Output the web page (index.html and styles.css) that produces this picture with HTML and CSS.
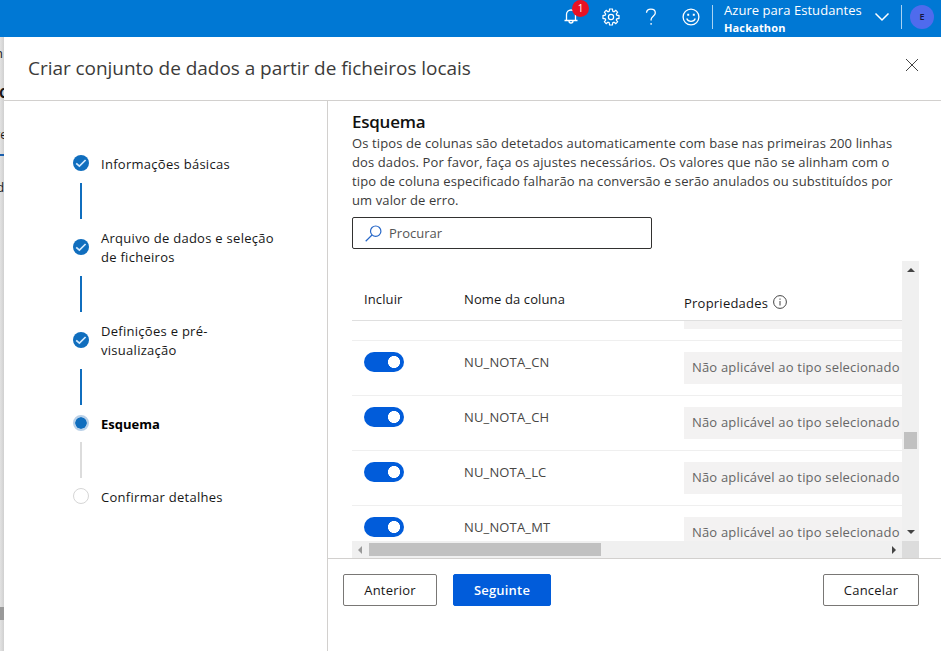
FILE: index.html
```html
<!DOCTYPE html>
<html lang="pt">
<head>
<meta charset="utf-8">
<title>Criar conjunto de dados</title>
<link rel="stylesheet" href="styles.css">
</head>
<body>
<header class="topbar">
  <div class="tool bell">
    <svg width="16" height="18" viewBox="0 0 16 18"><path d="M1.500 13.500H14.500M3.500 13V7.500a4.500 4.500 0 0 1 9 0V13M6 14a2 2 0 0 0 4 0" /></svg>
    <span class="badge">1</span>
  </div>
  <div class="tool gear">
    <svg width="18" height="18" viewBox="0 0 18 18"><path d="M7.600 1H10.400L10.800 3.200L12 3.700L13.800 2.400L15.600 4.200L14.300 6L14.800 7.200L17 7.600V10.400L14.800 10.800L14.300 12L15.600 13.800L13.800 15.600L12 14.300L10.800 14.800L10.400 17H7.600L7.200 14.800L6 14.300L4.200 15.600L2.400 13.800L3.700 12L3.200 10.800L1 10.400V7.600L3.200 7.200L3.700 6L2.400 4.200L4.200 2.400L6 3.700L7.200 3.200Z"/><circle cx="9" cy="9" r="2.600"/></svg>
  </div>
  <div class="tool help">
    <svg width="12" height="18" viewBox="0 0 12 18"><path d="M1.500 4.800C1.700 2.500 3.500 1.200 5.900 1.200C8.600 1.200 10.300 2.700 10.300 5C10.300 8 6.100 8.500 6.100 11.500V12.500M6.100 15V16.800"/></svg>
  </div>
  <div class="tool smile">
    <svg width="18" height="18" viewBox="0 0 18 18"><circle cx="9" cy="9" r="7.900"/><path d="M4.700 10.500C6.200 14.300 11.800 14.300 13.300 10.500"/><path class="solid" d="M5.200 5.700h2v2h-2zM10.800 5.700h2v2h-2z"/></svg>
  </div>
  <div class="account">
    <div class="names"><span class="subscription">Azure para Estudantes</span><strong class="workspace">Hackathon</strong></div>
    <svg width="16" height="10" viewBox="0 0 16 10"><path d="M1.500 1.500L8 8L14.500 1.500"/></svg>
  </div>
  <div class="avatar">E</div>
</header>
<div class="page">
  <aside class="underlay">
    <span class="peek first">n</span>
    <span class="peek second">C</span>
    <span class="peek third">re</span>
    <span class="peek fourth">d</span>
    <span class="peek-line"></span>
    <span class="peek-scroll"></span>
  </aside>
  <main class="panel">
    <div class="panel-head">
      <h1>Criar conjunto de dados a partir de ficheiros locais</h1>
      <svg class="close" width="14" height="14" viewBox="0 0 14 14"><path d="M1 1L13 13M13 1L1 13"/></svg>
    </div>
    <div class="panel-body">
      <ol class="steps">
        <li class="step done"><svg class="mark" width="16" height="16" viewBox="0 0 16 16"><circle cx="8" cy="8" r="8"/><path d="M3.200 8.300L6.400 11.200L12.600 5"/></svg><span>Informações básicas</span></li>
        <li class="link"></li>
        <li class="step tall"><svg class="mark" width="16" height="16" viewBox="0 0 16 16"><circle cx="8" cy="8" r="8"/><path d="M3.200 8.300L6.400 11.200L12.600 5"/></svg><span>Arquivo de dados e seleção<br>de ficheiros</span></li>
        <li class="link"></li>
        <li class="step tall"><svg class="mark" width="16" height="16" viewBox="0 0 16 16"><circle cx="8" cy="8" r="8"/><path d="M3.200 8.300L6.400 11.200L12.600 5"/></svg><span>Definições e pré-<br>visualização</span></li>
        <li class="link"></li>
        <li class="step current"><i class="dot"></i><span>Esquema</span></li>
        <li class="link pending"></li>
        <li class="step"><i class="dot"></i><span>Confirmar detalhes</span></li>
      </ol>
      <section class="content">
        <div class="schema">
          <h2>Esquema</h2>
          <p class="intro"><span>Os tipos de colunas são detetados automaticamente com base nas primeiras 200 linhas</span><span>dos dados. Por favor, faça os ajustes necessários. Os valores que não se alinham com o</span><span>tipo de coluna especificado falharão na conversão e serão anulados ou substituídos por</span><span>um valor de erro.</span></p>
          <div class="search"><svg width="17" height="17" viewBox="0 0 17 17"><circle cx="10.700" cy="6.200" r="5.200"/><path d="M7 10L0.700 16.200"/></svg><span>Procurar</span></div>
          <div class="table-frame">
            <div class="table">
              <div class="thead"><span>Incluir</span><span>Nome da coluna</span><span class="props">Propriedades<svg width="14" height="14" viewBox="0 0 14 14"><circle cx="7" cy="7" r="6.400"/><path d="M7 6V10.500M7 3.500V4.800"/></svg></span></div>
              <div class="row partial"><span></span><span></span><span class="na"></span></div>
              <div class="row"><i class="toggle"></i><span class="name">NU_NOTA_CN</span><span class="na">Não aplicável ao tipo selecionado</span></div>
              <div class="row"><i class="toggle"></i><span class="name">NU_NOTA_CH</span><span class="na">Não aplicável ao tipo selecionado</span></div>
              <div class="row"><i class="toggle"></i><span class="name">NU_NOTA_LC</span><span class="na">Não aplicável ao tipo selecionado</span></div>
              <div class="row"><i class="toggle"></i><span class="name">NU_NOTA_MT</span><span class="na">Não aplicável ao tipo selecionado</span></div>
            </div>
            <div class="vbar"><svg width="8" height="4" viewBox="0 0 8 4"><path d="M0 4L4 0L8 4Z"/></svg><i class="vthumb"></i><svg width="8" height="4" viewBox="0 0 8 4"><path d="M0 0L4 4L8 0Z"/></svg></div>
            <div class="hbar"><svg class="dim" width="4" height="8" viewBox="0 0 4 8"><path d="M4 0L0 4L4 8Z"/></svg><i class="hthumb"></i><svg width="4" height="8" viewBox="0 0 4 8"><path d="M0 0L4 4L0 8Z"/></svg></div>
            <div class="corner"></div>
          </div>
        </div>
        <footer class="actions"><button class="back">Anterior</button><button class="next">Seguinte</button><button class="cancel">Cancelar</button></footer>
      </section>
    </div>
  </main>
</div>
</body>
</html>
```
FILE: styles.css
```css
* { box-sizing: border-box; }
body { margin: 0; width: 941px; height: 651px; overflow: hidden; background: #fff; color: #171717; font: 13px/19px "Open Sans", "Noto Sans", sans-serif; }
svg { display: block; fill: none; stroke: currentColor; flex: none; }
h1, h2, p, ol { margin: 0; padding: 0; font-weight: 400; }

.topbar { height: 37px; background: #0078d4; color: #fff; display: flex; justify-content: flex-end; align-items: flex-start; }
.tool { display: flex; justify-content: center; width: 40px; padding-top: 8px; position: relative; stroke-width: 1.300; }
.gear svg { stroke-width: 1.200; }
.bell { padding-top: 7px; }
.badge { position: absolute; left: 21px; top: 0; width: 17px; height: 17px; border-radius: 50%; background: #e81123; font-size: 10px; line-height: 17px; text-align: center; }
.smile .solid { fill: #fff; stroke: none; }
.account { display: flex; margin-left: 1px; margin-top: 5px; width: 190px; height: 24px; border-left: 1px solid #a9d3f2; border-right: 1px solid #a9d3f2; }
.names { width: 150px; padding-left: 11px; margin-top: -5px; white-space: nowrap; }
.subscription { display: block; height: 20px; line-height: 21px; font-size: 13px; letter-spacing: 0.050px; }
.workspace { display: block; font-size: 11px; line-height: 15px; letter-spacing: 0.150px; }
.account svg { margin: 7px 0 0 11px; stroke-width: 1.500; }
.avatar { width: 24px; height: 24px; margin: 5px 7px 0 8px; border-radius: 50%; background: #4f6bed; color: #161640; font-size: 9px; font-weight: 600; line-height: 24px; text-align: center; }

.page { display: flex; height: 614px; }
.underlay { width: 4px; overflow: hidden; position: relative; background: linear-gradient(90deg, #e2e2e2, #d0d0d0); }
.peek { position: absolute; }
.first { top: 7px; right: 1px; }
.second { top: 46px; font-size: 14px; font-weight: 700; left: -1px; }
.third { top: 88px; right: -3px; font-size: 12px; }
.fourth { top: 141px; right: 0; font-size: 12px; }
.peek-line { position: absolute; top: 117px; width: 4px; height: 2px; background: #1a5fad; }
.peek-scroll { position: absolute; top: 570px; width: 4px; height: 13px; background: #999; }
.panel { width: 937px; background: #fff; }
.panel-head { height: 64px; border-bottom: 1px solid #d2d0ce; display: flex; justify-content: space-between; padding: 0 22px 0 24px; }
h1 { font-size: 19px; line-height: 62px; color: #3c3b3a; white-space: nowrap; letter-spacing: -0.040px; }
.close { margin-top: 21px; color: #444; stroke-width: 1; }
.panel-body { display: flex; height: 550px; }

.steps { list-style: none; width: 324px; border-right: 1px solid #d2d0ce; padding: 53px 0 0 69px; letter-spacing: 0.280px; }
.step { display: flex; align-items: flex-start; gap: 12px; white-space: nowrap; }
.step span { padding-top: 1px; margin-bottom: -1px; }
.mark, .dot { margin-top: 1px; }
.tall .mark { margin-top: 11px; }
.mark circle { fill: #106ebe; stroke: none; }
.mark path { stroke: #d4eaff; stroke-width: 1.700; }
.link { width: 2px; height: 36px; margin: 10px 0 9px 7px; background: #106ebe; }
.dot { width: 16px; height: 16px; border: 1px solid #d6d6d6; border-radius: 50%; }
.current { font-weight: 700; color: #000; letter-spacing: 0; }
.current .dot { border: 2px solid #b9d0e8; background: #106ebe; background-clip: padding-box; }
.pending { background: #dcdcdc; margin-top: 9px; }

.content { width: 613px; display: flex; flex-direction: column; }
.schema { height: 457px; padding: 10px 22px 0 24px; }
h2 { height: 23px; font-size: 17px; line-height: 22px; font-weight: 600; color: #111; letter-spacing: -0.250px; }
.intro { height: 76px; color: #3a3a3a; letter-spacing: 0.115px; }
.intro span { display: block; white-space: nowrap; }
.search { width: 300px; height: 32px; margin-top: 7px; border: 1px solid #323130; border-radius: 2px; display: flex; align-items: center; padding-left: 12px; gap: 7px; color: #555; }
.search svg { color: #2868c8; stroke-width: 1.200; }

.table-frame { display: grid; grid-template: 280px 17px / 550px 17px; margin-top: 12px; }
.table { overflow: hidden; }
.thead, .row { display: grid; grid-template-columns: 100px 220px 240px; padding-left: 12px; width: 572px; }
.thead { height: 60px; padding-top: 29px; border-bottom: 1px solid #dfdfdf; letter-spacing: 0.120px; }
.props { display: flex; padding-top: 4px; gap: 5px; letter-spacing: 0.230px; }
.props svg { margin-top: 1px; color: #444; stroke-width: 1; }
.row { height: 55px; padding-top: 11px; border-bottom: 1px solid #efefef; color: #484644; align-items: start; }
.partial { height: 20px; padding-top: 0; }
.na { height: 32px; padding-left: 8px; line-height: 31px; background: #f3f2f2; color: #666; white-space: nowrap; letter-spacing: 0.180px; }
.partial .na { height: 8px; }
.toggle { width: 40px; height: 20px; border-radius: 10px; background: radial-gradient(circle at 30px 10px, #fff 5.700px, #015cda 6.300px); }
.name { line-height: 20px; letter-spacing: 0.150px; }
.vbar { background: #f0f0f0; display: flex; flex-direction: column; align-items: center; padding: 7px 0; }
.vbar svg, .hbar svg { fill: #444; stroke: none; }
.vthumb { width: 13px; height: 17px; background: #c1c1c1; margin: 160px 0 81px; }
.hbar { background: #f0f0f0; display: flex; align-items: center; padding: 0 6px; }
.hbar .dim { fill: #999; }
.hthumb { width: 232px; height: 13px; background: #c1c1c1; margin: 0 auto 0 7px; }
.corner { background: #dcdcdc; }

.actions { height: 93px; border-top: 1px solid #d2d0ce; display: flex; align-items: flex-start; padding: 15px 22px 0 15px; }
button { height: 32px; padding: 0; border: 1px solid #797775; border-radius: 2px; background: #fff; color: #171717; font: 500 13px/28px "Open Sans", sans-serif; letter-spacing: 0.200px; }
.back { width: 94px; }
.next { width: 98px; margin-left: 16px; background: #015cda; border-color: #015cda; color: #fff; font-weight: 600; }
.cancel { width: 96px; margin-left: auto; }
```
